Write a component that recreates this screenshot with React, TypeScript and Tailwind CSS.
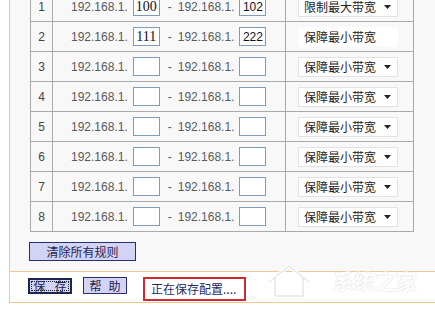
import React from 'react';

const rows = [
  { n: '1', a: '100', b: '102', mode: '限制最大带宽', arrow: true },
  { n: '2', a: '111', b: '222', mode: '保障最小带宽', arrow: false },
  { n: '3', a: '', b: '', mode: '保障最小带宽', arrow: true },
  { n: '4', a: '', b: '', mode: '保障最小带宽', arrow: true },
  { n: '5', a: '', b: '', mode: '保障最小带宽', arrow: true },
  { n: '6', a: '', b: '', mode: '保障最小带宽', arrow: true },
  { n: '7', a: '', b: '', mode: '保障最小带宽', arrow: true },
  { n: '8', a: '', b: '', mode: '保障最小带宽', arrow: true },
];

const sans = "font-['Liberation_Sans','Noto_Sans_CJK_SC',sans-serif]";
const cjk = "font-['Noto_Sans_CJK_SC',sans-serif]";

const App = () => {
  return (
    <div className={`relative w-[435px] h-[316px] overflow-hidden bg-white text-[#333] ${sans}`}>
      <div className="ml-[9px] w-[426px] h-[303px] border-l border-b border-[#efc896] bg-[#f8f8f8] flex flex-col">
        {/* rule table */}
        <div className="ml-[20px] -mt-[9px] w-[384px] border-l border-b border-[#aaaaaa]">
          {rows.map((r) => (
            <div key={r.n} className="flex h-[30px] border-t border-[#aaaaaa]">
              <div className="w-[22px] border-r border-[#aaaaaa] flex items-center justify-center text-[12px] text-[#444]">
                {r.n}
              </div>
              <div className="w-[233px] border-r border-[#aaaaaa] flex items-center pl-[18px] text-[12px] text-[#5a5a5a]">
                <span>192.168.1.</span>
                <span className="ml-[5px] w-[27px] h-[19px] border border-[#7f9db9] bg-white flex items-center justify-center font-['Liberation_Serif',serif] text-[14px] text-[#111]">
                  {r.a}
                </span>
                <span className="ml-[8px] mr-[6px]">-</span>
                <span>192.168.1.</span>
                <span className="ml-[5px] w-[27px] h-[19px] border border-[#7f9db9] bg-white flex items-center justify-center text-[12px] text-[#111]">
                  {r.b}
                </span>
              </div>
              <div className="w-[128px] border-r border-[#aaaaaa] flex items-center pl-[12px]">
                <div
                  className={`w-[100px] h-[20px] bg-white border flex items-center justify-between pl-[5px] pr-[6px] ${
                    r.arrow ? 'border-[#e2e2e2]' : 'border-transparent'
                  }`}
                >
                  <span className={`text-[12px] text-[#222] ${cjk}`}>{r.mode}</span>
                  {r.arrow && (
                    <svg width="7" height="4" viewBox="0 0 7 4">
                      <path d="M0 0h7L3.5 4z" fill="#222" />
                    </svg>
                  )}
                </div>
              </div>
            </div>
          ))}
        </div>

        <div className="flex pl-[19px] mt-[10px]">
          <button
            className={`w-[107px] h-[19px] border border-[#27306a] bg-[#d3d3f5] flex items-center justify-center text-[12px] text-[#1c2450] leading-none ${cjk}`}
          >
            清除所有规则
          </button>
        </div>

        {/* footer */}
        <div className="mt-[10px] flex-1 border-t border-[#efc896] bg-white flex items-start pt-[5px] pl-[18px]">
          <button className="mt-[1px] w-[44px] h-[16px] border-2 border-[#1c2450] bg-[#d3d3f5] flex p-[1px]">
            <span
              className={`flex-1 border border-dotted border-[#222] flex items-center justify-center gap-[9px] text-[12px] leading-none text-[#1c2450] ${cjk}`}
            >
              <span>保</span>
              <span>存</span>
            </span>
          </button>
          <button
            className={`ml-[11px] w-[44px] h-[17px] border border-[#27306a] bg-[#d3d3f5] flex items-center justify-center gap-[7px] text-[12px] leading-none text-[#1c2450] ${cjk}`}
          >
            <span>帮</span>
            <span>助</span>
          </button>
          <div
            className={`ml-[16px] w-[103px] h-[24px] border-2 border-[#d02a30] bg-white flex items-center pl-[6px] text-[12px] text-[#1f2a66] ${cjk}`}
          >
            正在保存配置....
          </div>
        </div>
      </div>

      {/* watermark */}
      <div className="absolute left-[265px] top-[262px] flex items-center gap-[6px] opacity-90">
        <svg width="62" height="38" viewBox="0 0 62 38">
          <path
            d="M4 20 L24 4 L44 20 M10 16 V34 H38 V16 M18 22 H32 M18 28 H32 M46 14 Q56 10 60 18"
            fill="none"
            stroke="#ffffff"
            strokeWidth="4"
            strokeLinecap="round"
          />
          <path d="M4 20 L24 4 L44 20 M10 16 V34 H38 V16" fill="none" stroke="#d8d8d8" strokeWidth="1" />
        </svg>
        <span className={`text-[21px] font-bold text-white [text-shadow:0_0_1px_#b8b8b8] ${cjk}`}>系统之家</span>
      </div>
    </div>
  );
};

export default App;
